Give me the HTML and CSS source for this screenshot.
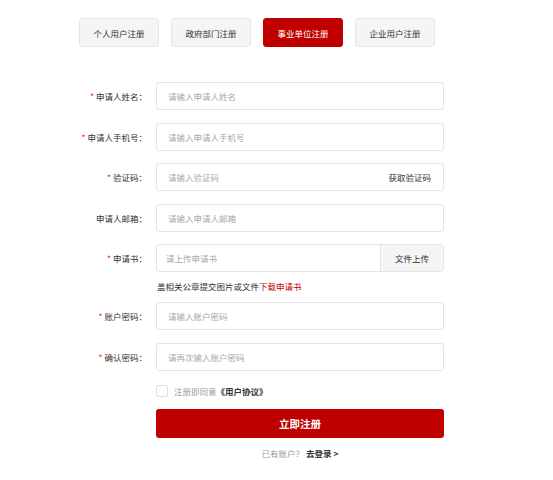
FILE: index.html
```html
<!DOCTYPE html>
<html lang="zh">
<head>
<meta charset="utf-8">
<link rel="stylesheet" href="styles.css">
</head>
<body>
<div class="page">
  <div class="tabs">
    <div class="tab">个人用户注册</div>
    <div class="tab">政府部门注册</div>
    <div class="tab active">事业单位注册</div>
    <div class="tab">企业用户注册</div>
  </div>
  <form class="form">
    <div class="row">
      <label class="label"><span class="req">*</span>申请人姓名：</label>
      <div class="field"><span class="ph">请输入申请人姓名</span></div>
    </div>
    <div class="row">
      <label class="label"><span class="req">*</span>申请人手机号：</label>
      <div class="field"><span class="ph">请输入申请人手机号</span></div>
    </div>
    <div class="row">
      <label class="label"><span class="req">*</span>验证码：</label>
      <div class="field code"><span class="ph">请输入验证码</span><span class="get">获取验证码</span></div>
    </div>
    <div class="row">
      <label class="label">申请人邮箱：</label>
      <div class="field"><span class="ph">请输入申请人邮箱</span></div>
    </div>
    <div class="row upload-row">
      <div class="line">
        <label class="label"><span class="req">*</span>申请书：</label>
        <div class="field upload"><span class="ph">请上传申请书</span><span class="upbtn">文件上传</span></div>
      </div>
      <div class="hint">盖相关公章提交图片或文件<a class="dl">下载申请书</a></div>
    </div>
    <div class="row">
      <label class="label"><span class="req">*</span>账户密码：</label>
      <div class="field"><span class="ph">请输入账户密码</span></div>
    </div>
    <div class="row">
      <label class="label"><span class="req">*</span>确认密码：</label>
      <div class="field"><span class="ph">请再次输入账户密码</span></div>
    </div>
    <div class="agree"><span class="box"></span><span class="agree-text">注册即同意</span><b class="proto">《用户协议》</b></div>
    <div class="submit">立即注册</div>
    <div class="login">已有账户？ <b>去登录 &gt;</b></div>
  </form>
</div>
</body>
</html>
```
FILE: styles.css
```css
* { box-sizing: border-box; }
html, body { margin: 0; padding: 0; background: #fff; }
body {
  font-family: "Noto Sans CJK SC", "Noto Sans", sans-serif;
  font-size: 8.5px;
  color: #333;
  width: 553px;
  height: 480px;
  overflow: hidden;
}
.page { padding-top: 18px; }
.tabs {
  display: flex;
  gap: 12px;
  padding-left: 79px;
}
.tab {
  width: 80px;
  height: 29px;
  display: flex;
  align-items: center;
  justify-content: center;
  background: #f5f5f5;
  border: 1px solid #e6e6e6;
  border-radius: 3px;
  color: #333;
}
.tab.active {
  background: #c00000;
  border-color: #c00000;
  color: #fff;
}
.form {
  margin-top: 35px;
  display: flex;
  flex-direction: column;
}
.row, .line {
  display: flex;
  align-items: center;
}
.row { margin-bottom: 12.5px; }
.upload-row { flex-direction: column; align-items: stretch; margin-bottom: 10px; }
.label {
  width: 147px;
  margin-right: 9px;
  text-align: right;
  color: #333;
  white-space: nowrap;
}
.req { color: #e0301e; margin-right: 2px; }
.field {
  width: 288px;
  height: 28px;
  border: 1px solid #e4e4e4;
  border-radius: 3px;
  display: flex;
  align-items: center;
  padding-left: 11px;
  background: #fff;
}
.ph { color: #a8a8a8; flex: 1; }
.code .get { color: #333; padding-right: 12px; }
.upload { padding-left: 9px; overflow: hidden; }
.upbtn {
  width: 63px;
  height: 100%;
  background: #f5f5f5;
  border-left: 1px solid #e4e4e4;
  display: flex;
  align-items: center;
  justify-content: center;
  color: #333;
}
.hint {
  margin-left: 157px;
  margin-top: 8px;
  height: 12px;
  line-height: 12px;
  color: #333;
}
.dl { color: #c00000; }
.agree {
  margin-left: 156px;
  margin-top: 2px;
  display: flex;
  align-items: center;
  height: 12px;
}
.box {
  width: 12px;
  height: 12px;
  border: 1px solid #ddd;
  border-radius: 2px;
  margin-right: 6px;
}
.agree-text { color: #999; }
.proto { color: #333; font-weight: bold; }
.submit {
  margin-left: 156px;
  margin-top: 12px;
  width: 288px;
  height: 29px;
  border-radius: 3px;
  background: #c00000;
  color: #fff;
  font-weight: bold;
  font-size: 10.5px;
  display: flex;
  align-items: center;
  justify-content: center;
}
.login {
  margin-left: 156px;
  width: 288px;
  margin-top: 9px;
  text-align: center;
  color: #999;
  line-height: 12px;
}
.login b { color: #333; }
```
